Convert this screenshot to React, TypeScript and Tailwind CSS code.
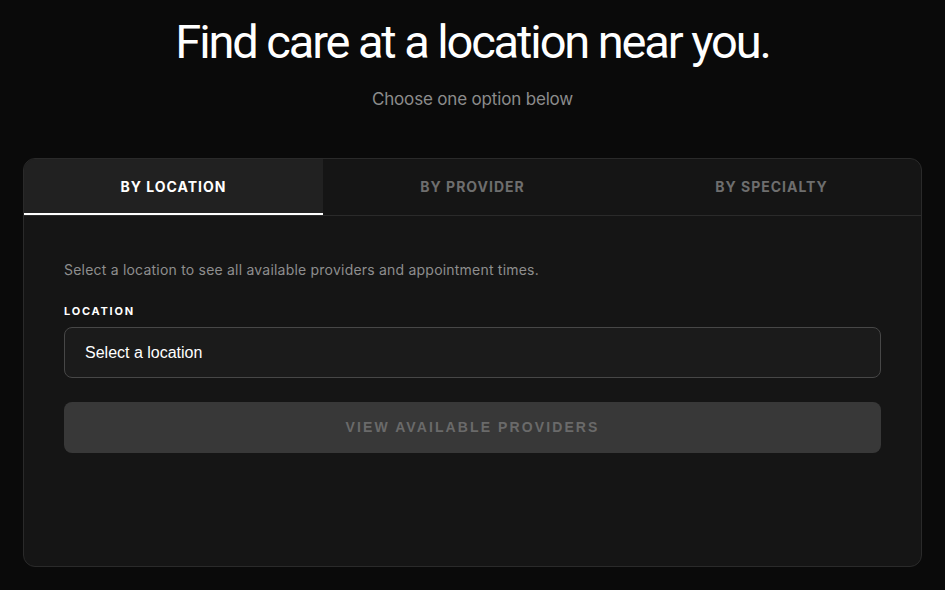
import React from "react";

export default function App() {
  const tabs = ["BY LOCATION", "BY PROVIDER", "BY SPECIALTY"];
  return (
    <div className="min-h-[590px] w-full bg-[#0a0a0a] font-['Inter',sans-serif] text-white">
      <div className="flex flex-col items-center pt-[14px]">
        <h1 className="font-['Roboto',sans-serif] text-[47px] leading-[56px] font-normal tracking-[-0.045em] text-white">
          Find care at a location near you.
        </h1>
        <p className="mt-[17px] text-[17px] leading-[24px] text-[#8c8c8c] tracking-[-0.01em]">
          Choose one option below
        </p>
      </div>
      <div className="mx-[23px] mt-[47px] h-[409px] overflow-hidden rounded-[12px] border border-[#2a2a2a] bg-[#151515]">
        <div className="flex border-b border-[#2a2a2a]">
          {tabs.map((t, i) => (
            <div
              key={t}
              className={
                i === 0
                  ? "flex h-[56px] flex-1 items-center justify-center border-b-2 border-white bg-[#212121] text-[14px] font-bold tracking-[0.07em] text-white"
                  : "flex h-[56px] flex-1 items-center justify-center border-b-2 border-transparent text-[14px] font-bold tracking-[0.07em] text-[#6e6e6e]"
              }
            >
              {t}
            </div>
          ))}
        </div>
        <div className="px-[40px] pt-[44px]">
          <p className="text-[14px] leading-[20px] tracking-[0.015em] text-[#8e8e8e]">
            Select a location to see all available providers and appointment times.
          </p>
          <div className="mt-[24px] text-[11px] leading-[14px] font-bold tracking-[0.16em] text-white">
            LOCATION
          </div>
          <div className="mt-[9px] flex h-[51px] items-center rounded-[8px] border border-[#474747] bg-[#1b1b1b] px-[20px] font-['Liberation_Sans',sans-serif] text-[16px] text-white">
            Select a location
          </div>
          <div className="mt-[24px] flex h-[51px] items-center justify-center rounded-[8px] bg-[#383838] font-['Liberation_Sans',sans-serif] text-[14px] font-bold tracking-[0.15em] text-[#6a6a6a]">
            VIEW AVAILABLE PROVIDERS
          </div>
        </div>
      </div>
    </div>
  );
}
